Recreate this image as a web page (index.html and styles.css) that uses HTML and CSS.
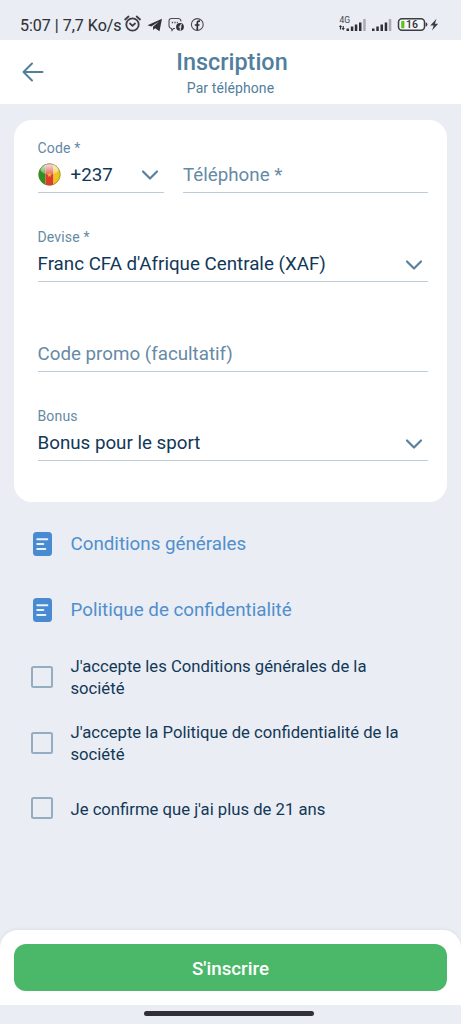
FILE: index.html
```html
<!DOCTYPE html>
<html lang="fr">
<head>
<meta charset="utf-8">
<title>Inscription</title>
<link rel="stylesheet" href="styles.css">
</head>
<body>
<div class="screen">
  <div class="status">
    <span class="clock">5:07 | 7,7 Ko/s</span>
    <svg class="status-left" width="84" height="20" viewBox="0 0 84 20">
      <g fill="none" stroke="#3d3e44" stroke-width="1.8" stroke-linecap="round">
        <circle cx="8.500" cy="10.500" r="6.200"/>
        <path d="M1.200 5.500 4.500 2.500M16 5.500 12.700 2.500M6 9.500l2.500 2.300L11 9.500"/>
      </g>
      <path fill="#303137" d="M23.500 11.300 38 4.800 35.500 17.200 31.100 14.300 29.100 16 29 12.800 35 7.500 27.300 12.400z"/>
      <path fill="none" stroke="#4c4d53" stroke-width="1.1" d="M51 14.500H49.500l-1.500 2-.5-2Q45 14 45 11.500V7Q45 4.500 47.500 4.500H54Q57 4.500 57 7.500"/>
      <path stroke="#4c4d53" stroke-width="1.300" stroke-dasharray="1.300 1.200" d="M47.800 8.500h6"/>
      <circle cx="56" cy="12.800" r="3.900" fill="#303137"/>
      <path d="M58 10.700h-.7q-1 0-1 1V16.500M54.600 13h3" stroke="#eaedf3" stroke-width="1.100" fill="none"/>
      <circle cx="73.300" cy="10.500" r="5.900" fill="none" stroke="#4c4d53" stroke-width="1.100"/>
      <path d="M76 7.200h-1q-1.700 0-1.700 1.800v7.200M70.800 11h4.700" fill="none" stroke="#303137" stroke-width="1.700"/>
    </svg>
    <svg class="status-right" width="104" height="22" viewBox="0 0 104 22">
      <text class="network" x="1.500" y="8.700">4G</text>
      <path fill="#303137" d="M.8 13 2.500 11 4.200 13H3.100V15.500H1.900V13zM3.600 14 5.200 16.500 6.800 14H5.800V12H4.700V14zM8.500 14.500H11V17H8.500zM12.800 12.500h2.500V17h-2.500zM16.800 10.500h2.500V17h-2.500zM21 8.500h2.500V17H21zM34 14.500h2.500V17H34zM38.300 12.500h2.500V17h-2.500zM42.500 10.500H45V17h-2.500zM46.700 8.500h2.500V17h-2.500z"/>
      <path fill="#a9abb1" d="M25.200 5h2.500v12h-2.500zM50.800 5h2.500v12h-2.500z"/>
      <rect x="60.500" y="4.800" width="26" height="11.500" rx="3.500" fill="#f4f6f8" stroke="#3c3d43" stroke-width="1.500"/>
      <rect x="63.200" y="7" width="3.200" height="7.200" rx=".6" fill="#5cc321"/>
      <path d="M87.600 8.300q1.800.3 1.800 2.200t-1.800 2.300z" fill="#3c3d43"/>
      <text class="charge" x="68" y="14">16</text>
      <path fill="#3c3d43" d="M98.500 4.700 92.300 11.500h3.400L94 16.500 100.200 9.800H96.900z"/>
    </svg>
  </div>

  <header class="header">
    <svg class="back" width="22" height="20" viewBox="0 0 22 20" fill="none" stroke="#527e9d" stroke-width="2" stroke-linecap="round" stroke-linejoin="round"><path d="M20.500 10H1.500M10 1.500 1.500 10l8.500 8.500"/></svg>
    <h1 class="title">Inscription</h1>
    <p class="subtitle">Par téléphone</p>
  </header>

  <main class="content">
    <section class="card">
      <div class="phone-row">
        <div class="field">
          <div class="label">Code *</div>
          <div class="value">
            <svg class="flag" width="23" height="23" viewBox="0 0 23 23">
              <defs>
                <clipPath id="disc"><circle cx="11.500" cy="11.500" r="11"/></clipPath>
                <linearGradient id="shine" x1="0" y1="0" x2="0" y2="1"><stop offset="0" stop-color="#fff" stop-opacity=".85"/><stop offset="1" stop-color="#fff" stop-opacity=".25"/></linearGradient>
              </defs>
              <g clip-path="url(#disc)">
                <path fill="#2f8f20" d="M0 0h7.500v23H0z"/><path fill="#df3b29" d="M7.500 0h8v23h-8z"/><path fill="#ecc520" d="M15.500 0H23v23h-7.500z"/>
                <ellipse cx="11.500" cy="6" rx="9.300" ry="5.500" fill="url(#shine)"/>
                <path fill="#ffb03a" d="m11.500 9.200.7 1.800 1.900.1-1.500 1.200.5 1.800-1.600-1-1.600 1 .5-1.800-1.500-1.200 1.900-.1z"/>
              </g>
              <circle cx="11.500" cy="11.500" r="10.700" fill="none" stroke="#6e7525" stroke-opacity=".6" stroke-width=".9"/>
            </svg>
            <span class="dial">+237</span>
            <svg class="chevron" width="18" height="12" viewBox="0 0 18 12"><path d="m2 2.500 7 7 7-7"/></svg>
          </div>
        </div>
        <div class="field"><div class="label"></div><div class="value placeholder"><span>Téléphone *</span></div></div>
      </div>
      <div class="field">
        <div class="label">Devise *</div>
        <div class="value"><span>Franc CFA d'Afrique Centrale (XAF)</span><svg class="chevron" width="18" height="12" viewBox="0 0 18 12"><path d="m2 2.500 7 7 7-7"/></svg></div>
      </div>
      <div class="field"><div class="label"></div><div class="value placeholder"><span>Code promo (facultatif)</span></div></div>
      <div class="field">
        <div class="label">Bonus</div>
        <div class="value"><span>Bonus pour le sport</span><svg class="chevron" width="18" height="12" viewBox="0 0 18 12"><path d="m2 2.500 7 7 7-7"/></svg></div>
      </div>
    </section>

    <div class="options">
      <div class="option link"><svg class="doc" width="19" height="24" viewBox="0 0 19 24"><rect width="19" height="24" rx="3.500" fill="#488bd3"/><path d="M4.300 7.300h10M4.300 12h6M4.300 17h8" stroke="#eaf2fb" stroke-width="2.100" stroke-linecap="round"/></svg><span>Conditions générales</span></div>
      <div class="option link"><svg class="doc" width="19" height="24" viewBox="0 0 19 24"><rect width="19" height="24" rx="3.500" fill="#488bd3"/><path d="M4.300 7.300h10M4.300 12h6M4.300 17h8" stroke="#eaf2fb" stroke-width="2.100" stroke-linecap="round"/></svg><span>Politique de confidentialité</span></div>
      <div class="option check"><i class="box"></i><span>J'accepte les Conditions générales de la<br>société</span></div>
      <div class="option check"><i class="box"></i><span>J'accepte la Politique de confidentialité de la<br>société</span></div>
      <div class="option check"><i class="box"></i><span>Je confirme que j'ai plus de 21 ans</span></div>
    </div>
  </main>

  <footer class="footer"><button class="submit">S'inscrire</button></footer>
  <div class="nav"><div class="handle"></div></div>
</div>
</body>
</html>
```

FILE: styles.css
```css
* { box-sizing: border-box; }
body { margin: 0; background: #eaedf3; font-family: Roboto, "Liberation Sans", sans-serif; }
svg { display: block; flex: none; }
.screen { width: 461px; height: 1024px; display: flex; flex-direction: column; overflow: hidden; }
.status { height: 40px; flex: none; display: flex; align-items: center; padding: 9px 19px 0 20px; color: #303137; }
.clock { font-size: 16px; line-height: 20px; width: 104px; padding-top: 2px; white-space: nowrap; -webkit-text-stroke: .1px #303137; }
.status-left { margin-top: -1px; }
.status-right { margin-left: auto; }
.network { font-size: 8.500px; fill: #44454b; }
.charge { font-size: 10.500px; font-weight: 500; fill: #303137; }
.header { height: 64px; flex: none; background: #fff; display: grid; grid-template: 40px 24px / 54px 1fr 54px; text-align: center; color: #527e9d; }
.back { grid-row: 1 / 3; align-self: center; margin-left: 22px; }
.title { grid-column: 2; margin: 3px 0 0; padding-left: 3px; font-size: 23.400px; line-height: 38px; font-weight: 500; }
.subtitle { grid-column: 2; grid-row: 2; margin: 0; font-size: 14px; line-height: 17px; letter-spacing: .1px; }
.content { flex: 1; min-height: 0; padding: 15.500px 14px 0; }
.card { background: #fff; border-radius: 18px; padding: 13px 19px 40.500px 23.500px; display: grid; gap: 29.500px; }
.phone-row { display: grid; grid-template-columns: 126.500px 1fr; gap: 19px; }
.field { height: 60px; border-bottom: 1.500px solid #bdcdd8; padding-top: 7px; }
.label { height: 17.500px; font-size: 14px; line-height: 17.500px; letter-spacing: .15px; color: #6489a4; }
.value { height: 34px; display: flex; align-items: center; font-size: 18.750px; color: #123858; white-space: nowrap; }
.value span { padding-top: 1px; }
.placeholder { color: #668aa5; }
.dial { margin-left: 10px; }
.chevron { margin: 2px 5px 0 auto; fill: none; stroke: #5a809e; stroke-width: 2.200; stroke-linecap: round; stroke-linejoin: round; }
.options { padding: 10px 0 0 17px; }
.option { height: 65.800px; display: grid; grid-template-columns: 39.500px 1fr; align-items: center; font-size: 16.670px; line-height: 21.500px; color: #123858; white-space: nowrap; }
.link { font-size: 18.750px; color: #508fce; }
.link span { padding-top: 1px; }
.doc { margin-left: 2px; }
.check { padding-top: 1.500px; }
.check span { padding-top: 2px; }
.box { width: 22px; height: 22px; border: 2px solid #95adc3; border-radius: 2.500px; }
.footer { height: 75px; flex: none; padding: 14px; background: #fff; border-radius: 18px 18px 0 0; box-shadow: 0 -1px 3px #dce1e8; }
.submit { display: block; width: 100%; height: 47px; border: 0; border-radius: 12px; background: #4bb869; color: #fff; font: 500 18.750px/47px Roboto, sans-serif; padding: 2px 0 0; }
.nav { height: 19px; flex: none; display: flex; justify-content: center; padding-top: 6px; background: #eaedf3; }
.handle { width: 170px; height: 5px; border-radius: 3px; background: #303036; margin-right: 3px; }
```
